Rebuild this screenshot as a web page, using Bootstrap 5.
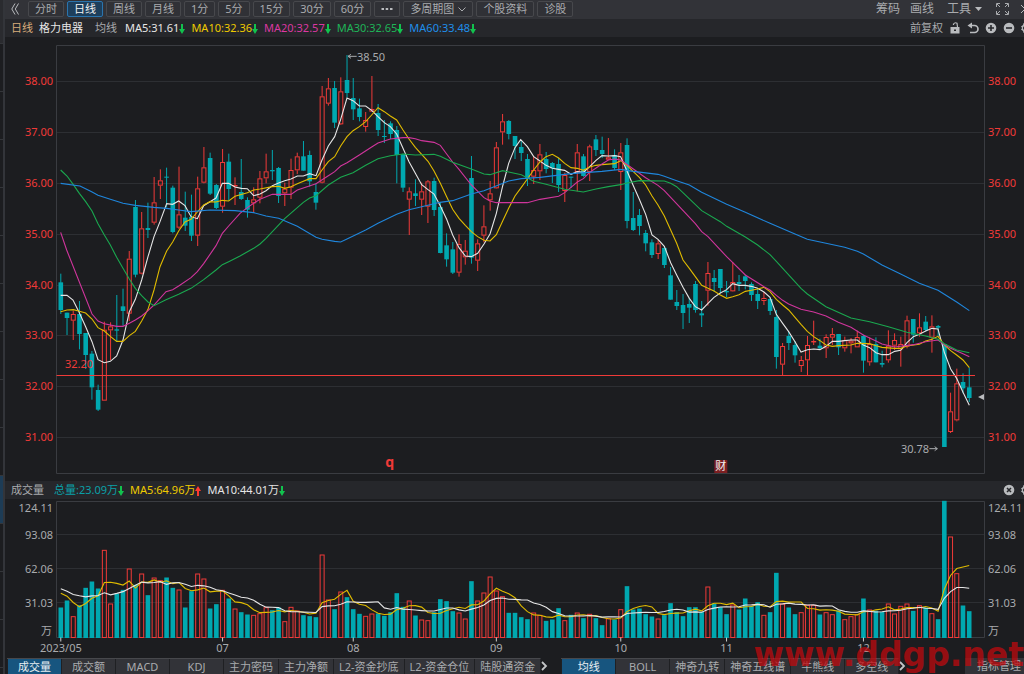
<!DOCTYPE html>
<html lang="zh-CN">
<head>
<meta charset="utf-8">
<meta name="viewport" content="width=device-width, initial-scale=1">
<title>格力电器 日线</title>
<link href="https://cdn.jsdelivr.net/npm/bootstrap@5.3.0/dist/css/bootstrap.min.css" rel="stylesheet">
<style>
:root{--bg:#1c1d20;--bar:#323338;--bar2:#26272b;--edge:#47484c;--txt:#a9abae;--up:#f03a38;--down:#00a8b0}
body{background:var(--bg);color:var(--txt);font:11px/16px "Noto Sans","Noto Sans CJK SC",sans-serif;min-height:100vh;overflow:hidden}
.side-strip{width:5px;border-right:2px solid #33353a;overflow:hidden}
.side-strip div{height:48px;flex:none;border-bottom:1px solid #34363a}
.side-strip .side-head{height:44px;background:#2a2b2f}
.side-strip .on{background:#1d3c56}
.desk{min-width:0;height:100vh}
.tool-row{height:19px;background:var(--bar);padding:0 0 1px 6px;gap:3px;overflow:hidden;white-space:nowrap}
.tool-row .fold{margin-right:6px}
.info-row{height:18px;background:var(--bar2);padding-left:6px;overflow:hidden;white-space:nowrap}
.tool-row .btn,.tool-row .tool-select{font-size:11px;line-height:14px;height:16px;padding:0 6px;border:1px solid var(--edge);border-radius:2px;color:var(--txt);background:#303136}
.tool-row .btn.active{background:#1d3f5c;border-color:#2a74ad;color:#f2f2f2}
.tool-row .btn.bare,.info-row .btn,.tab-row .btn.bare{border:0;background:none;padding:0;line-height:1;color:#b9bbbe}
.tool-row .btn.big{font-size:12px;line-height:16px;margin-right:10px;color:var(--txt)}
.tool-row .btn.big.snug{margin-right:7px}
.tool-row .tool-select{width:70px;appearance:none;background:#303136 url("data:image/svg+xml,%3Csvg xmlns='http://www.w3.org/2000/svg' width='8' height='5'%3E%3Cpath d='M.5.5 4 4 7.500.5' fill='none' stroke='%23a9abae'/%3E%3C/svg%3E") no-repeat right 6px center}
.info-row .btn svg,.tool-row .btn svg,.tab-row .btn svg{display:block}
.icon-set{gap:6px}
.reading{margin-right:6px}
.names{gap:6px;margin-right:8px}
.names .avg{margin-left:6px}
.total{margin-left:10px}
.wh{color:#e6e6e6}.ye{color:#efca00}.ma{color:#dc38a2}.gr{color:#1fb458}.bl{color:#1f8eea}.te{color:#0aa0a8}.or{color:#d9ad7c}
.price-pane{flex:444 1 0;min-height:0}
.vol-pane{flex:158 1 0;min-height:0}
.plot{display:block;width:100%;height:100%}
.plot text{font-size:11px;fill:var(--txt)}
.plot .red{fill:var(--up)}
.plot .line{fill:none;stroke-width:1.1}
.tab-row{height:17px;padding:1px 0 0 2px;overflow:hidden;white-space:nowrap}
.tab-row .tabs{border-top:1px solid var(--edge);border-right:1px solid #232428}
.tab-row .tabs .btn{font-size:11px;line-height:14px;height:16px;min-width:54px;padding:0 5px 1px 5px;border:0;border-left:1px solid #1f2023;border-radius:0;background:var(--bar);color:var(--txt)}
.tab-row .tabs .btn.active{background:#17557f;color:#e8eef2}
.tab-row .more{width:20px;padding:3px 0 0 4px}
.tab-row .manage{background:var(--bar);padding:0 3px 0 12px;color:var(--txt);font-size:11px;line-height:14px;border:0;border-radius:0}
.site-mark{right:0;bottom:0;font:bold 33px/38px "DejaVu Sans",sans-serif;color:rgba(190,10,14,.75);pointer-events:none;white-space:nowrap}
</style>
</head>
<body class="d-flex position-relative">
<aside class="side-strip d-flex flex-column vh-100 flex-shrink-0">
<div class="side-head"></div><div></div><div></div><div></div><div></div><div></div><div></div><div></div><div></div><div></div><div class="on"></div><div></div><div></div><div></div>
</aside>
<main class="desk d-flex flex-column flex-grow-1">
  <nav class="tool-row d-flex align-items-center" aria-label="周期">
    <button class="btn bare fold" aria-label="收起"><svg width="8" height="12" viewBox="0 0 8 12" fill="none" stroke="#b9bbbe"><path d="M4 .5.8 6 4 11.500M7.500.5 4.300 6 7.500 11.500"/></svg></button>
    <button class="btn">分时</button>
    <button class="btn active">日线</button>
    <button class="btn">周线</button>
    <button class="btn">月线</button>
    <button class="btn">1分</button>
    <button class="btn">5分</button>
    <button class="btn">15分</button>
    <button class="btn">30分</button>
    <button class="btn">60分</button>
    <button class="btn" aria-label="更多周期"><svg width="12" height="14" viewBox="0 0 12 14" fill="#b9bbbe"><path d="M.5 6h2.500v2H.5zM4.700 6h2.500v2H4.700zM9 6h2.500v2H9z"/></svg></button>
    <select class="tool-select" aria-label="多周期图"><option>多周期图</option></select>
    <button class="btn">个股资料</button>
    <button class="btn">诊股</button>
    <button class="btn bare big snug ms-auto">筹码</button>
    <button class="btn bare big">画线</button>
    <button class="btn bare big d-flex align-items-center">工具<svg class="ms-1" width="7" height="4"><path d="M0 0h7L3.500 4z" fill="#b9bbbe"/></svg></button>
    <button class="btn bare me-2" aria-label="全屏"><svg width="15" height="14" viewBox="0 0 15 14" fill="none" stroke="#a9abae"><path d="M1.500 5V1.500H5M10 1.500h3.500V5M13.500 9v3.500H10M5 12.500H1.500V9M2 2l3 3M13 2l-3 3M13 12l-3-3M2 12l3-3"/></svg></button>
    <button class="btn bare" aria-label="关闭"><svg width="3" height="12" viewBox="0 0 3 12" fill="none" stroke="#b9bbbe"><path d="M0 2 4 6 0 10"/></svg></button>
  </nav>
  <section class="info-row d-flex align-items-center">
    <div class="names d-flex">
      <span class="or">日线</span>
      <span class="wh">格力电器</span>
      <span class="avg">均线</span>
    </div>
    <span class="reading wh">MA5:31.61<svg width="6" height="10" viewBox="0 0 6 10"><path d="M2 0h2v5h2L3 10 0 5h2z" fill="#12c24e"/></svg></span>
    <span class="reading ye">MA10:32.36<svg width="6" height="10" viewBox="0 0 6 10"><path d="M2 0h2v5h2L3 10 0 5h2z" fill="#12c24e"/></svg></span>
    <span class="reading ma">MA20:32.57<svg width="6" height="10" viewBox="0 0 6 10"><path d="M2 0h2v5h2L3 10 0 5h2z" fill="#12c24e"/></svg></span>
    <span class="reading gr">MA30:32.65<svg width="6" height="10" viewBox="0 0 6 10"><path d="M2 0h2v5h2L3 10 0 5h2z" fill="#12c24e"/></svg></span>
    <span class="reading bl">MA60:33.48<svg width="6" height="10" viewBox="0 0 6 10"><path d="M2 0h2v5h2L3 10 0 5h2z" fill="#12c24e"/></svg></span>
    <div class="icon-set d-flex align-items-center ms-auto">
      <span>前复权</span>
      <button class="btn" aria-label="锁定"><svg width="12" height="12" viewBox="0 0 12 12"><path d="M1.500 5h9v6.500h-9zM5 7.500v1.500h2V7.500z" fill="#b9bbbe" fill-rule="evenodd"/><path d="M4.500 3V2Q6 0 8 1.200L8.500 5" fill="none" stroke="#b9bbbe" stroke-width="1.200"/></svg></button>
      <button class="btn" aria-label="撤销"><svg width="12" height="12" viewBox="0 0 12 12"><path d="M3 3.500h4.500a3.500 3.500 0 0 1 0 7H3" fill="none" stroke="#b9bbbe" stroke-width="1.700"/><path d="M5 .5v6L.5 3.500z" fill="#b9bbbe"/></svg></button>
      <button class="btn" aria-label="放大"><svg width="12" height="12" viewBox="0 0 12 12"><circle cx="6" cy="6" r="5.300" fill="#b9bbbe"/><path d="M3 6h6M6 3v6" stroke="#26272b" stroke-width="1.600"/></svg></button>
      <button class="btn" aria-label="缩小"><svg width="12" height="12" viewBox="0 0 12 12"><circle cx="6" cy="6" r="5.300" fill="#b9bbbe"/><path d="M3 6h6" stroke="#26272b" stroke-width="1.600"/></svg></button>
      <button class="btn" aria-label="设置"><svg width="3" height="12" viewBox="0 0 3 12"><path d="M4 1.500 2.500 1 2 3 0 4.500 1.200 6 0 7.500 2 9l.5 2L4 10.500V8a2 2 0 0 1 0-4z" fill="#b9bbbe"/></svg></button>
    </div>
  </section>
  <section class="price-pane"><svg class="plot" id="price" role="img" aria-label="日K线图"></svg></section>
  <section class="info-row d-flex align-items-center">
    <span>成交量</span>
    <span class="reading te total">总量:23.09万<svg width="6" height="10" viewBox="0 0 6 10"><path d="M2 0h2v5h2L3 10 0 5h2z" fill="#12c24e"/></svg></span>
    <span class="reading ye">MA5:64.96万<svg width="6" height="10" viewBox="0 0 6 10"><path d="M2 10h2V5h2L3 0 0 5h2z" fill="#ff3a30"/></svg></span>
    <span class="reading wh">MA10:44.01万<svg width="6" height="10" viewBox="0 0 6 10"><path d="M2 0h2v5h2L3 10 0 5h2z" fill="#12c24e"/></svg></span>
    <div class="icon-set d-flex align-items-center ms-auto">
      <button class="btn" aria-label="关闭副图"><svg width="12" height="12" viewBox="0 0 12 12"><circle cx="6" cy="6" r="5.300" fill="#b9bbbe"/><path d="m4 4 4 4M8 4 4 8" stroke="#26272b" stroke-width="1.500"/></svg></button>
      <button class="btn" aria-label="副图设置"><svg width="3" height="12" viewBox="0 0 3 12"><path d="M4 1.500 2.500 1 2 3 0 4.500 1.200 6 0 7.500 2 9l.5 2L4 10.500V8a2 2 0 0 1 0-4z" fill="#b9bbbe"/></svg></button>
    </div>
  </section>
  <section class="vol-pane"><svg class="plot" id="volume" role="img" aria-label="成交量图"></svg></section>
  <nav class="tab-row d-flex" aria-label="指标">
    <div class="tabs d-flex flex-shrink-0">
      <button class="btn active">成交量</button><button class="btn">成交额</button><button class="btn">MACD</button><button class="btn">KDJ</button><button class="btn">主力密码</button><button class="btn">主力净额</button><button class="btn">L2-资金抄底</button><button class="btn">L2-资金仓位</button><button class="btn">陆股通资金</button>
    </div>
    <button class="btn bare more flex-shrink-0" aria-label="更多副图指标"><svg width="7" height="10" viewBox="0 0 7 10" fill="none" stroke="#c4c6c8" stroke-width="1.800"><path d="m1 1 4 4-4 4"/></svg></button>
    <div class="tabs d-flex flex-shrink-0">
      <button class="btn active">均线</button><button class="btn">BOLL</button><button class="btn">神奇九转</button><button class="btn">神奇五线谱</button><button class="btn">牛熊线</button><button class="btn">多空线</button>
    </div>
    <button class="btn bare more flex-shrink-0" aria-label="更多主图指标"><svg width="7" height="10" viewBox="0 0 7 10" fill="none" stroke="#c4c6c8" stroke-width="1.800"><path d="m1 1 4 4-4 4"/></svg></button>
    <button class="btn manage ms-auto flex-shrink-0">指标管理</button>
  </nav>
</main>
<div class="site-mark position-absolute">www.ddgp.net</div>
<script src="https://cdn.jsdelivr.net/npm/bootstrap@5.3.0/dist/js/bootstrap.bundle.min.js"></script>
<script>
// One candle per entry: direction, high, body top, body bottom, low (chart units, downwards, 152.4 per yuan).
const candles = `g821,847,930,942 g938,938,954,1005 r932,942,962,1020 g903,942,1002,1048 g999,999,1065,1107 g1053,1061,1162,1199 g1154,1170,1229,1233 r965,989,1202,1202 r967,979,991,1080 g885,988,992,1023
g866,919,933,977 r753,776,941,963 g600,621,824,832 r636,685,821,823 g608,684,690,714 r531,607,668,674 r508,541,557,597 g503,530,533,622 g557,563,696,700 r500,643,683,687
g575,653,677,693 g584,651,707,723 r530,565,707,738 r441,502,548,550 g458,474,581,585 g552,555,624,627 r447,486,620,638 g461,485,567,602 r532,555,558,615 g477,576,597,600
g592,600,629,653 r562,598,610,636 r513,535,593,610 r461,514,535,550 g450,510,514,540 g501,504,588,609 r548,566,580,618 r476,510,563,597 r458,469,511,522 g423,469,512,512
g452,465,544,560 g550,576,608,629 r258,289,548,550 r234,265,311,317 g243,264,368,384 r232,274,373,375 g165,240,279,292 g234,294,328,360 g296,325,351,364 r336,360,381,395
r228,327,335,335 g312,339,390,408 g360,408,411,429 g364,370,402,417 g378,390,465,550 g461,463,563,576 r562,574,599,705 g538,580,588,618 r548,574,599,645 r540,544,620,669
g533,543,630,648 g608,621,759,760 g700,736,778,800 g726,748,818,822 r703,732,818,830 r720,752,772,794 g468,534,773,791 r718,730,782,813 r616,679,707,727 r543,580,601,632
r426,442,565,566 r342,364,397,434 g360,363,402,418 g408,408,438,477 g423,441,459,483 g462,477,537,558 r468,510,530,552 r432,463,514,540 g456,477,507,520 g486,489,505,549
g474,492,555,576 r518,525,573,606 g530,530,533,564 r432,457,516,574 g462,469,528,530 r434,439,516,543 g405,418,450,468 g410,450,462,474 r414,472,479,481 g448,465,504,510
r429,457,516,570 g415,435,663,685 g576,654,690,693 g627,645,678,706 g690,699,730,754 g718,727,765,774 r720,730,762,777 g739,744,795,804 g801,826,899,899 g870,906,918,930
g882,915,939,987 g894,912,923,969 g843,852,930,938 g903,940,946,981 r786,819,872,917 g810,834,846,875 g807,807,864,880 g843,873,877,891 r786,846,874,875 g825,846,852,873
g824,829,843,868 g847,852,885,903 g864,882,903,927 r876,894,903,915 g892,897,933,945 g930,951,1071,1106 r1029,1038,1094,1125 g996,1008,1029,1050 g1023,1035,1066,1088 r1068,1080,1098,1116
r1008,1035,1081,1125 r962,1023,1026,1035 g1016,1037,1045,1050 r1003,1011,1045,1074 r984,1002,1013,1035 g1002,1002,1042,1065 r1010,1020,1045,1055 r1014,1022,1030,1060 r992,1011,1042,1042 g1004,1008,1082,1118
r1012,1032,1087,1097 g1012,1032,1087,1087 g1052,1089,1094,1102 r991,1037,1081,1088 r1000,1020,1037,1050 r1010,1032,1048,1100 r947,961,1040,1045 g957,957,1004,1028 r940,982,1000,1010 g948,965,990,995
r946,979,1013,1058 g975,978,983,1010 g1032,1032,1341,1341 r1178,1234,1296,1299 r1106,1150,1261,1264 g1120,1146,1165,1180 g1103,1162,1194,1206`
  .split(/\s+/).map(s => ({up: s[0] === 'r', v: s.slice(1).split(',').map(Number)}));

// Top edge of each volume bar, measured down to the baseline at 472; 102 units are 31.03万.
const volTop = [382,361,408,375,323,304,325,209,370,340,329,265,314,280,345,292,300,292,323,328,382,333,280,295,385,372,329,355,385,396,403,404,399,381,390,382,423,380,391,405,408,411,223,358,387,334,351,387,401,407,400,400,407,396,339,380,361,406,418,420,396,357,363,393,397,415,303,361,337,289,331,348,398,398,411,417,397,404,422,418,384,420,404,397,414,401,414,435,414,418,387,318,388,385,402,409,415,405,369,396,408,381,381,395,319,370,381,402,373,388,355,378,366,404,396,278,370,382,402,396,374,374,403,396,402,391,417,408,402,355,388,392,395,370,400,377,370,392,375,382,399,417,62,169,279,376,393];

const lines = {
'#e6e6e6':'182,886 201,886 219,900 238,938 257,980 276,1025 294,1079 313,1088 331,1084 350,1068 369,1020 388,935 406,898 425,840 444,770 462,710 480,665 500,611 518,613 536,603 555,617 573,650 592,656 611,617 630,605 648,594 667,550 686,550 705,561 724,565 742,566 761,587 780,582 798,572 817,557 836,549 854,542 873,537 892,528 910,528 929,521 948,527 966,480 985,438 1004,410 1022,358 1041,294 1059,302 1078,318 1097,318 1115,331 1134,350 1153,368 1171,380 1190,402 1209,445 1227,485 1246,520 1265,554 1284,569 1302,582 1321,618 1340,658 1358,705 1377,743 1396,768 1414,770 1433,760 1452,732 1470,702 1489,640 1508,558 1526,490 1545,443 1562,419 1582,440 1601,470 1620,483 1638,496 1657,505 1676,508 1694,511 1713,523 1732,515 1750,517 1769,500 1788,481 1806,467 1825,468 1844,467 1862,470 1881,513 1900,557 1918,598 1937,643 1956,705 1974,718 1993,739 2012,788 2030,825 2049,862 2068,895 2086,920 2105,930 2124,910 2142,892 2161,879 2180,869 2198,851 2217,856 2236,856 2254,859 2273,865 2292,876 2310,892 2329,943 2348,970 2366,995 2385,1025 2403,1056 2422,1049 2441,1047 2460,1049 2478,1039 2497,1024 2516,1024 2534,1022 2553,1020 2572,1020 2590,1035 2609,1043 2628,1058 2646,1064 2665,1064 2684,1054 2702,1051 2721,1028 2740,1010 2758,1003 2777,993 2796,985 2814,987 2833,1057 2852,1107 2870,1135 2889,1177 2908,1216',
'#e0bb00':'182,935 201,930 220,929 238,934 257,939 276,957 294,983 313,993 331,1009 350,1024 369,1024 388,1007 406,994 425,963 444,928 462,870 480,800 500,753 518,726 536,693 555,666 573,658 592,636 611,615 630,605 648,606 667,601 686,603 705,589 742,578 761,570 780,567 817,560 836,559 854,565 873,560 892,551 929,536 948,536 966,510 985,485 1004,470 1022,438 1041,410 1059,392 1078,380 1097,365 1115,345 1134,323 1153,335 1171,348 1190,360 1209,390 1227,417 1246,442 1265,463 1284,484 1302,513 1321,550 1340,590 1358,628 1377,655 1396,676 1414,695 1433,710 1452,721 1470,723 1489,704 1508,663 1526,625 1545,588 1564,562 1582,537 1601,510 1620,486 1638,470 1657,463 1676,474 1694,490 1713,503 1732,505 1750,511 1769,501 1788,496 1806,494 1844,491 1862,482 1881,496 1900,515 1918,532 1937,555 1956,588 1974,615 1993,648 2012,690 2030,730 2049,780 2068,805 2086,830 2105,856 2124,865 2142,873 2161,885 2180,895 2198,890 2217,884 2236,874 2254,871 2273,867 2292,862 2310,875 2329,898 2348,915 2366,930 2385,952 2403,973 2422,994 2441,1010 2460,1022 2478,1035 2497,1039 2516,1037 2553,1035 2572,1030 2609,1031 2628,1037 2646,1042 2684,1045 2702,1045 2721,1038 2758,1033 2777,1023 2796,1018 2814,1009 2833,1035 2852,1052 2870,1065 2889,1080 2908,1103',
'#d0359c':'182,697 200,750 276,942 294,963 313,971 350,979 369,979 388,970 406,960 425,948 444,932 462,915 498,875 518,869 536,858 573,833 592,815 611,791 648,737 667,700 686,678 720,640 742,623 761,610 780,598 817,583 873,583 892,570 948,551 985,527 1004,515 1022,498 1041,488 1078,465 1115,441 1134,429 1171,417 1209,413 1227,413 1246,416 1265,422 1302,427 1321,436 1340,462 1358,486 1377,508 1414,555 1452,593 1470,603 1489,608 1582,608 1620,598 1676,589 1694,578 1713,562 1732,546 1750,536 1769,517 1806,492 1825,480 1844,477 1862,480 1900,507 1937,533 1974,556 1993,572 2086,671 2105,695 2124,710 2180,770 2236,825 2292,860 2310,870 2329,886 2348,901 2366,912 2403,928 2441,936 2478,948 2515,967 2553,982 2590,1005 2628,1023 2646,1032 2684,1041 2740,1034 2777,1025 2814,1020 2833,1034 2852,1045 2889,1061 2908,1070',
'#1aa84f':'182,510 201,528 220,554 238,580 257,605 276,633 294,671 313,705 331,735 350,772 369,805 388,837 406,865 425,887 444,906 462,917 498,899 536,883 573,865 611,839 648,810 667,794 686,785 720,768 761,745 780,732 798,715 854,656 910,607 929,594 948,587 985,555 1022,532 1059,518 1097,496 1134,476 1171,467 1209,462 1246,465 1302,463 1321,469 1358,487 1414,507 1452,522 1470,524 1508,512 1526,516 1564,524 1601,544 1638,553 1694,568 1750,576 1788,567 1825,560 1862,554 1881,549 1918,542 1993,543 2012,550 2030,560 2105,632 2161,665 2180,679 2236,711 2273,735 2310,764 2329,784 2403,865 2422,882 2478,920 2553,954 2609,965 2665,980 2721,997 2777,1008 2814,1018 2833,1031 2870,1050 2908,1058',
'#1f86dc':'182,550 240,558 275,575 294,586 331,598 369,610 406,616 462,622 500,625 536,630 573,635 630,630 705,632 761,638 798,648 836,655 892,679 948,712 966,718 1004,724 1022,726 1041,717 1097,690 1134,670 1190,643 1227,629 1265,620 1320,607 1358,602 1414,582 1452,572 1526,543 1564,536 1620,532 1713,521 1806,514 1862,508 1900,514 1974,523 1993,529 2030,542 2068,555 2105,577 2180,613 2236,637 2310,670 2385,702 2422,718 2478,730 2534,742 2572,754 2590,762 2646,795 2702,822 2758,850 2814,871 2833,883 2870,906 2908,932'
};
const L = 51.5, R = 40;            // axis gutters on either side
const UP = '#f03a38', DOWN = '#00a8b0', GRID = '#2d2f33', FRAME = '#3a3c41';

function seg(x1, y1, x2, y2, c, w = 1) { return `<path d="M${x1} ${y1}L${x2} ${y2}" stroke="${c}" stroke-width="${w}"/>`; }
function box(x, y, w, h, c, hollow) {
  return `<rect x="${x}" y="${y}" width="${w}" height="${h}" ` + (hollow ? `fill="none" stroke="${c}"/>` : `fill="${c}"/>`);
}
function label(x, y, t, cls = '', anchor = 'start', extra = '') {
  return `<text x="${x}" y="${y + 4}" class="${cls}" text-anchor="${anchor}" ${extra}>${t}</text>`;
}
function drawPrice() {
  const el = document.getElementById('price'), W = el.clientWidth, H = el.clientHeight;
  const k = H / 444, kx = (W - L - R) / 927.5, right = W - R + .5;
  const X = u => L + (u / 3 - 56.5) * kx, Y = u => (u / 3 - 37) * k, cx = i => X(182.4 + i * 18.667);
  let s = '';
  for (let p = 31; p <= 38; p++) {
    const y = Y(244 + (38 - p) * 152.4);
    s += seg(L, Math.round(y) + .5, right, Math.round(y) + .5, GRID);
    s += label(48, y, p + '.00', 'red', 'end') + label(W - 36, y, p + '.00', 'red');
  }
  s += `<path d="M${L} ${Math.round(Y(136)) + .5}H${right}V${Math.round(Y(1421)) - .5}H${L}z" fill="none" stroke="${FRAME}"/>`;
  candles.forEach((c, i) => {
    const x = cx(i), [h, t, b, l] = c.v.map(Y);
    if (c.up) s += seg(x, h, x, t, UP) + seg(x, b, x, l, UP) + box(x - 2, t + .5, 4, Math.max(b - t - 1, .4), UP, true);
    else s += seg(x, h, x, l, DOWN) + box(x - 2.300, t, 4.600, Math.max(b - t, 1), DOWN);
  });
  for (const c in lines)
    s += `<polyline class="line" stroke="${c}" points="${lines[c].split(' ').map(p => { const [a, b] = p.split(','); return X(+a) + ',' + Y(+b); }).join(' ')}"/>`;
  const cost = Math.round(Y(1126)) + .5;
  s += seg(L, cost, X(2925), cost, UP) + label(X(195), Y(1092), '32.20', 'red');
  s += label(X(1071), Y(170), '38.50') + `<path d="M${X(1044)} ${Y(169)}H${X(1070)}M${X(1053)} ${Y(163)}L${X(1044)} ${Y(169)}L${X(1053)} ${Y(175)}" fill="none" stroke="#a9abae"/>`;
  s += label(X(2787), Y(1347), '30.78', '', 'end') + `<path d="M${X(2788)} ${Y(1346)}H${X(2812)}M${X(2804)} ${Y(1340)}L${X(2812)} ${Y(1346)}L${X(2804)} ${Y(1352)}" fill="none" stroke="#a9abae"/>`;
  s += `<path d="M${X(2934)} ${Y(1191)}l6-3v6z" fill="#b9bbbe"/>`;
  s += label(X(1169), Y(1388), 'q', 'red', 'middle', 'style="font-weight:700;font-size:14px"');
  s += box(X(2143), Y(1380), 13, 13, '#7c1f22') + label(X(2162), Y(1399), '财', '', 'middle', 'style="fill:#f2f2f2"');
  el.innerHTML = s;
}
function drawVolume() {
  const el = document.getElementById('volume'), W = el.clientWidth, H = el.clientHeight;
  const base = H - 19.5, k = (base - 2.500) / 136, kx = (W - L - R) / 927.5, right = W - R + .5;
  const X = i => L + (60.8 - 56.5 + i * 6.222) * kx, Y = c => base - (472 - c) / 3 * k;
  let s = '';
  [['93.08', 164], ['62.06', 266], ['31.03', 367]].forEach(([t, c]) => {
    const y = Math.round(Y(c)) - .5;
    s += seg(L, y, right, y, GRID) + label(48, y, t, '', 'end') + label(W - 36, y, t);
  });
  s += label(48, 9, '124.11', '', 'end') + label(W - 36, 9, '124.11');
  s += label(47, base - 7, '万', '', 'end') + label(W - 36, base - 7, '万');
  s += `<path d="M${L} 2.500H${right}V${base}H${L}z" fill="none" stroke="${FRAME}"/>`;
  volTop.forEach((c, i) => {
    const x = X(i), y = Y(c);
    s += candles[i].up ? box(x - 2, y + .5, 4, base - y - .5, UP, true) : box(x - 2.300, y, 4.600, base - y + .5, DOWN);
  });
  const mean = (n, seed) => volTop.map((_, i) => i < n - 1 ? seed[i] : volTop.slice(i - n + 1, i + 1).reduce((a, b) => a + b) / n);
  [['#e0bb00', mean(5, [339,348,367,380])], ['#e6e6e6', mean(10, [326,333,343,347,350,347,346,338,344])]].forEach(([c, m]) =>
    s += `<polyline class="line" stroke="${c}" points="${m.map((v, i) => X(i) + ',' + Y(v)).join(' ')}"/>`);
  [[0, '2023/05'], [26, '07'], [47, '08'], [70, '09'], [90, '10'], [107, '11'], [129, '12']].forEach(([i, t]) =>
    s += seg(X(i), base, X(i), base + 4, '#d0d0d0') + label(X(i), base + 10, t, '', 'middle'));
  el.innerHTML = s;
}
function draw() { drawPrice(); drawVolume(); }
draw();
addEventListener('resize', draw);
</script>
</body>
</html>
